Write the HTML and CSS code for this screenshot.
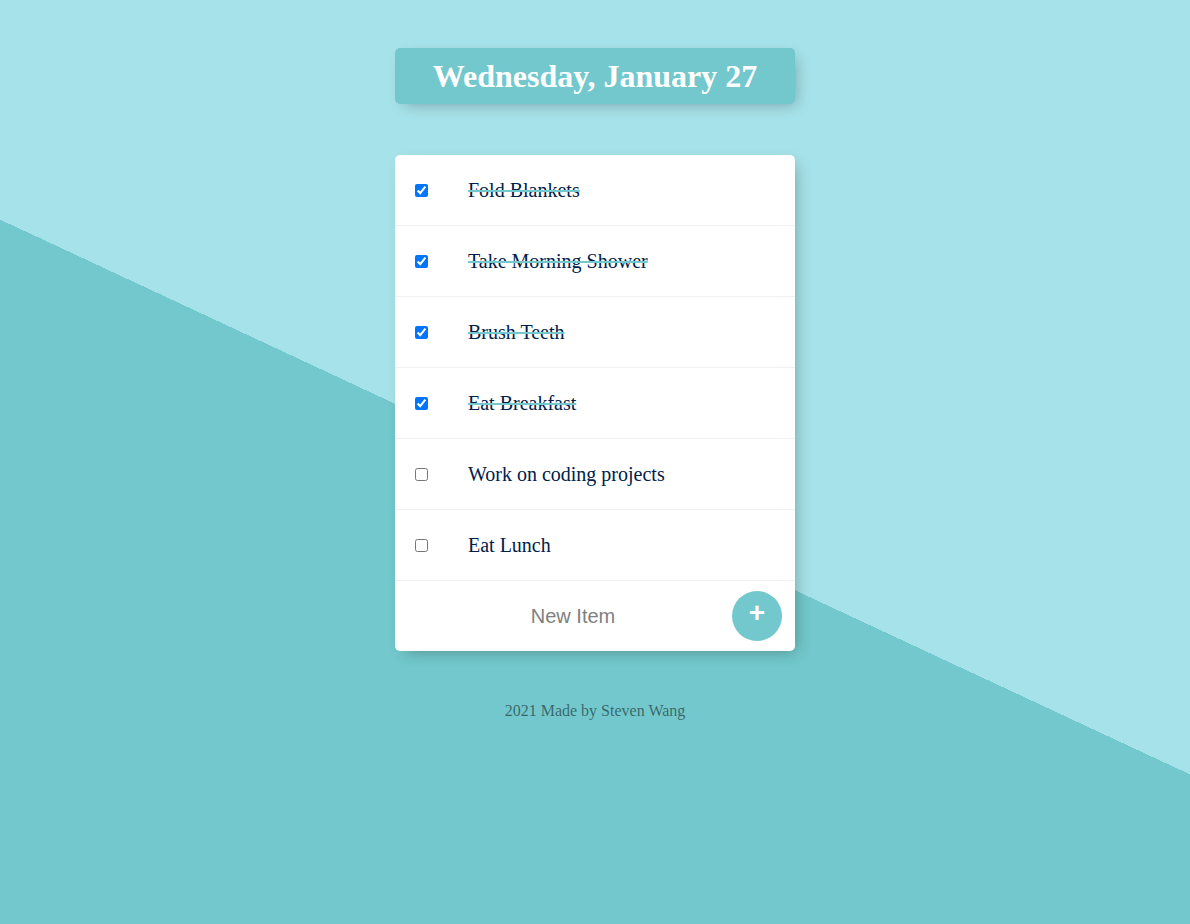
FILE: index.html
```html
<!DOCTYPE html>
<html lang="en">
<head>
<meta charset="utf-8">
<title>To Do List</title>
<link rel="stylesheet" href="styles.css">
</head>
<body>
<main class="page">
  <div class="heading">
    <h1 class="heading-title">Wednesday, January 27</h1>
  </div>
  <div class="box">
    <div class="item"><input class="check" type="checkbox" checked><p class="item-text">Fold Blankets</p></div>
    <div class="item"><input class="check" type="checkbox" checked><p class="item-text">Take Morning Shower</p></div>
    <div class="item"><input class="check" type="checkbox" checked><p class="item-text">Brush Teeth</p></div>
    <div class="item"><input class="check" type="checkbox" checked><p class="item-text">Eat Breakfast</p></div>
    <div class="item"><input class="check" type="checkbox"><p class="item-text">Work on coding projects</p></div>
    <div class="item"><input class="check" type="checkbox"><p class="item-text">Eat Lunch</p></div>
    <form class="new-form">
      <input class="new-input" type="text" placeholder="New Item" autocomplete="off">
      <button class="add-btn" type="button">+</button>
    </form>
  </div>
  <footer class="footer">2021 Made by Steven Wang</footer>
</main>
</body>
</html>
```

FILE: styles.css
```css
html {
  background-color: #a6e2e9;
  background-image: linear-gradient(25deg, #72c8cc 50%, #a6e2e9 50%);
  min-height: 994px;
  font-family: "Liberation Serif", "Times New Roman", serif;
}

body {
  margin: 0;
}

.page {
  display: flex;
  flex-direction: column;
  align-items: center;
  padding-top: 48px;
}

.heading {
  width: 400px;
  background-color: #72c8cc;
  border-radius: 5px;
  box-shadow: 5px 5px 15px -5px rgba(0, 0, 0, 0.3);
  text-align: center;
}

.heading-title {
  margin: 0;
  padding: 10px 10px 9px;
  color: #fff;
  font-size: 32px;
  font-weight: bold;
  line-height: 37px;
}

.box {
  width: 400px;
  margin-top: 51px;
  background: #fff;
  border-radius: 5px;
  box-shadow: 5px 5px 15px -5px rgba(0, 0, 0, 0.3);
}

.item {
  min-height: 70px;
  display: flex;
  align-items: center;
  border-bottom: 1px solid #f1f1f1;
}

.check {
  margin: 0 20px;
  width: 13px;
  height: 13px;
}

.item-text {
  margin: 0;
  padding: 20px;
  font-size: 20px;
  color: #00204a;
}

.check:checked + .item-text {
  text-decoration: line-through;
  text-decoration-color: #72c8cc;
}

.new-form {
  display: flex;
  align-items: center;
  height: 70px;
  margin-left: 20px;
  padding-right: 13px;
}

.new-input {
  flex: 1;
  min-width: 0;
  height: 60px;
  border: none;
  padding: 0;
  text-align: center;
  font-family: "Liberation Sans", Arial, sans-serif;
  font-size: 20px;
  color: #333;
  background: transparent;
}

.new-input::placeholder {
  color: grey;
  opacity: 1;
}

.new-input:focus {
  outline: none;
}

.add-btn {
  width: 50px;
  height: 50px;
  margin-left: 1px;
  border: 0;
  border-radius: 50%;
  background-color: #72c8cc;
  color: #fff;
  font-family: "Liberation Sans", Arial, sans-serif;
  font-size: 28px;
  font-weight: bold;
  line-height: 1;
  padding: 0 0 6px;
}

.footer {
  margin-top: 51px;
  color: rgba(0, 0, 0, 0.5);
  font-size: 16px;
  text-align: center;
}
```
